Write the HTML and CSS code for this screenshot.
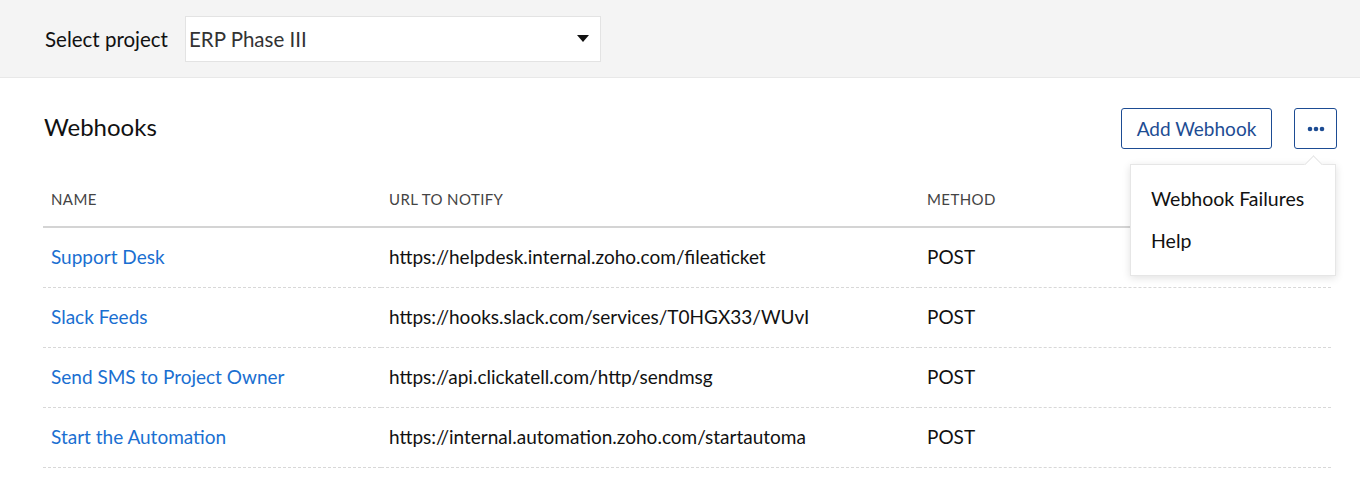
FILE: index.html
```
<!DOCTYPE html>
<html>
  <head>
    <title>Webhooks</title>
    <link rel="stylesheet" href="styles.css">
  </head>
  <body>
    <header class="project-bar">
      <label class="project-label" for="project">Select project</label>
      <div class="project-select" id="project">
        <span>ERP Phase III</span>
        <svg class="caret" width="12" height="8" viewBox="0 0 12 8"><path d="M0 0h12L6 7z" fill="#111"/></svg>
      </div>
    </header>

    <main class="content">
      <div class="title-row">
        <h1>Webhooks</h1>
        <div class="actions">
          <button class="btn btn-add">Add Webhook</button>
          <div class="more">
            <button class="btn btn-more" aria-label="More">
              <svg width="20" height="6" viewBox="0 0 20 6"><circle cx="4" cy="3" r="2.3" fill="#1d4c93"/><circle cx="10" cy="3" r="2.3" fill="#1d4c93"/><circle cx="16" cy="3" r="2.3" fill="#1d4c93"/></svg>
            </button>
            <div class="menu">
              <div class="menu-item">Webhook Failures</div>
              <div class="menu-item">Help</div>
            </div>
          </div>
        </div>
      </div>

      <table class="hooks">
        <thead>
          <tr>
            <th class="col-name">Name</th>
            <th class="col-url">URL to notify</th>
            <th>Method</th>
          </tr>
        </thead>
        <tbody>
          <tr>
            <td><a href="#">Support Desk</a></td>
            <td><div class="url">https://helpdesk.internal.zoho.com/fileaticket</div></td>
            <td>POST</td>
          </tr>
          <tr>
            <td><a href="#">Slack Feeds</a></td>
            <td><div class="url">https://hooks.slack.com/services/T0HGX33/WUvI</div></td>
            <td>POST</td>
          </tr>
          <tr>
            <td><a href="#">Send SMS to Project Owner</a></td>
            <td><div class="url">https://api.clickatell.com/http/sendmsg</div></td>
            <td>POST</td>
          </tr>
          <tr>
            <td><a href="#">Start the Automation</a></td>
            <td><div class="url">https://internal.automation.zoho.com/startautoma</div></td>
            <td>POST</td>
          </tr>
        </tbody>
      </table>
    </main>
  </body>
</html>
```

FILE: styles.css
```
body {
  font-family: Lato, "Open Sans", sans-serif;
  margin: 0;
  padding: 0;
  color: #111;
  background: #fff;
}

.project-bar {
  background-color: #f4f4f4;
  border-bottom: 1px solid #e8e8e8;
  height: 78px;
  display: flex;
  align-items: center;
  padding-left: 45px;
  box-sizing: border-box;
}

.project-label {
  font-size: 20.5px;
  width: 140px;
}

.project-select {
  width: 416px;
  height: 46px;
  box-sizing: border-box;
  background: #fff;
  border: 1px solid #e3e3e3;
  display: flex;
  align-items: center;
  justify-content: space-between;
  padding: 0 11px 0 3px;
  font-size: 20.5px;
  color: #333;
}

.content {
  padding: 30px 23px 0 43px;
}

.title-row {
  display: flex;
  align-items: center;
  justify-content: space-between;
}

h1 {
  font-size: 24px;
  font-weight: normal;
  margin: -4px 0 0;
  padding-left: 1px;
}

.actions {
  display: flex;
  gap: 22px;
}

.btn {
  height: 41px;
  background: #fff;
  border: 1px solid #1d4c93;
  border-radius: 3px;
  color: #1d4c93;
  font-family: inherit;
  font-size: 19px;
  padding: 0;
  cursor: pointer;
}

.btn-add {
  width: 151px;
}

.more {
  position: relative;
}

.btn-more {
  width: 43px;
  display: flex;
  align-items: center;
  justify-content: center;
}

.menu {
  position: absolute;
  top: 56px;
  right: 1px;
  width: 206px;
  height: 112px;
  box-sizing: border-box;
  background: #fff;
  border: 1px solid #e6e6e6;
  box-shadow: 0 2px 8px rgba(0, 0, 0, 0.12);
  padding-top: 13px;
  z-index: 2;
}

.menu::before {
  content: "";
  position: absolute;
  top: -7px;
  right: 15px;
  width: 12px;
  height: 12px;
  background: #fff;
  border-top: 1px solid #e6e6e6;
  border-left: 1px solid #e6e6e6;
  transform: rotate(45deg);
}

.menu-item {
  font-size: 19.5px;
  line-height: 42px;
  padding-left: 20px;
  color: #111;
}

.hooks {
  width: 1288px;
  margin-top: 22px;
  border-collapse: collapse;
  table-layout: fixed;
}

.hooks th {
  text-align: left;
  font-weight: normal;
  font-size: 15px;
  letter-spacing: 0.4px;
  text-transform: uppercase;
  color: #444;
  height: 55px;
  padding: 0 8px;
  border-bottom: 2px solid #d4d4d4;
}

.col-name {
  width: 322px;
}

.col-url {
  width: 522px;
}

.hooks td {
  height: 60px;
  padding: 0 8px 1px;
  box-sizing: border-box;
  font-size: 19px;
  border-bottom: 1px dashed #d8d8d8;
}

.hooks a {
  color: #1a6fd1;
  text-decoration: none;
}

.url {
  width: 421px;
  overflow: hidden;
  white-space: nowrap;
}
```
